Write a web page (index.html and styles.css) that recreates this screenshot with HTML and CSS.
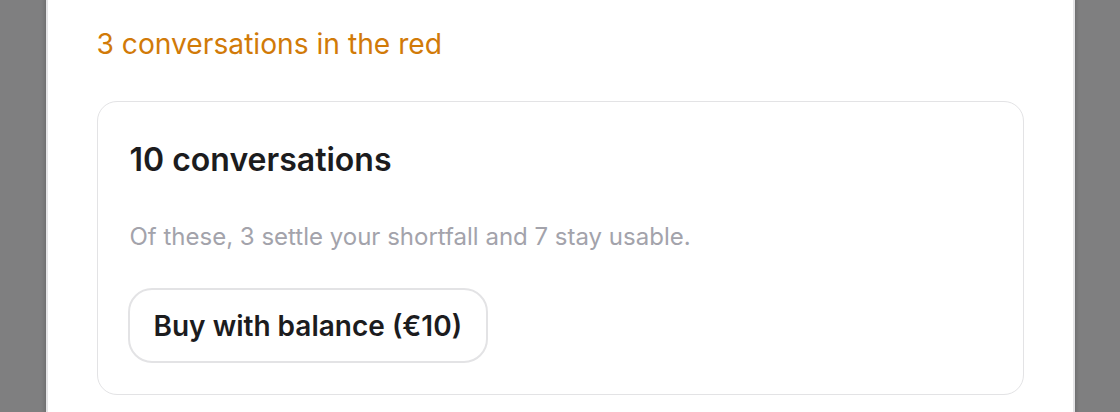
FILE: index.html
```html
<!DOCTYPE html>
<html lang="en">

<head>
    <meta charset="UTF-8">
    <meta name="viewport" content="width=device-width, initial-scale=1.0">
    <title>Buy conversations</title>
    <link rel="stylesheet" href="styles.css">
</head>

<body>
    <div class="sheet">
        <p class="debt-note">3 conversations in the red</p>

        <div class="pack-card">
            <h2 class="pack-title">10 conversations</h2>
            <p class="pack-hint">Of these, 3 settle your shortfall and 7 stay usable.</p>
            <button class="buy-btn" type="button">Buy with balance (€10)</button>
        </div>
    </div>
</body>

</html>
```

FILE: styles.css
```css
/* base */
html, body {
    margin: 0;
    padding: 0;
    height: 100%;
    overflow: hidden;
}

body {
    background: #7f7f80;
    font-family: Inter, "Noto Sans", sans-serif;
    color: #1c1c1e;
}

/* white sheet, cut off top and bottom */
.sheet {
    width: 1025px;
    min-height: 100%;
    margin: 0 auto;
    background: #fff;
    box-sizing: border-box;
    padding: 26px 49px 0 49px;
    box-shadow: 0 0 0 2px #e4e4e6, 0 0 4px 3px rgba(0, 0, 0, 0.18);
}

.debt-note {
    margin: 0;
    font-size: 28.2px;
    line-height: 36px;
    color: #d17a08;
}

.pack-card {
    margin-top: 39px;
    border: 1px solid #e3e3e5;
    border-radius: 20px;
    padding: 38px 32px 31px 32px;
}

.pack-title {
    margin: 0;
    font-size: 32px;
    line-height: 40px;
    font-weight: 600;
}

.pack-hint {
    margin: 41px 0 0 0;
    font-size: 24px;
    line-height: 32px;
    color: #a3a3ab;
}

.buy-btn {
    margin: 35px 0 0 -2px;
    height: 75px;
    padding: 0 24px;
    border: 2px solid #e3e3e5;
    border-radius: 24px;
    background: #fff;
    font-family: inherit;
    font-size: 28px;
    font-weight: 600;
    color: #1c1c1e;
    cursor: pointer;
}
```
